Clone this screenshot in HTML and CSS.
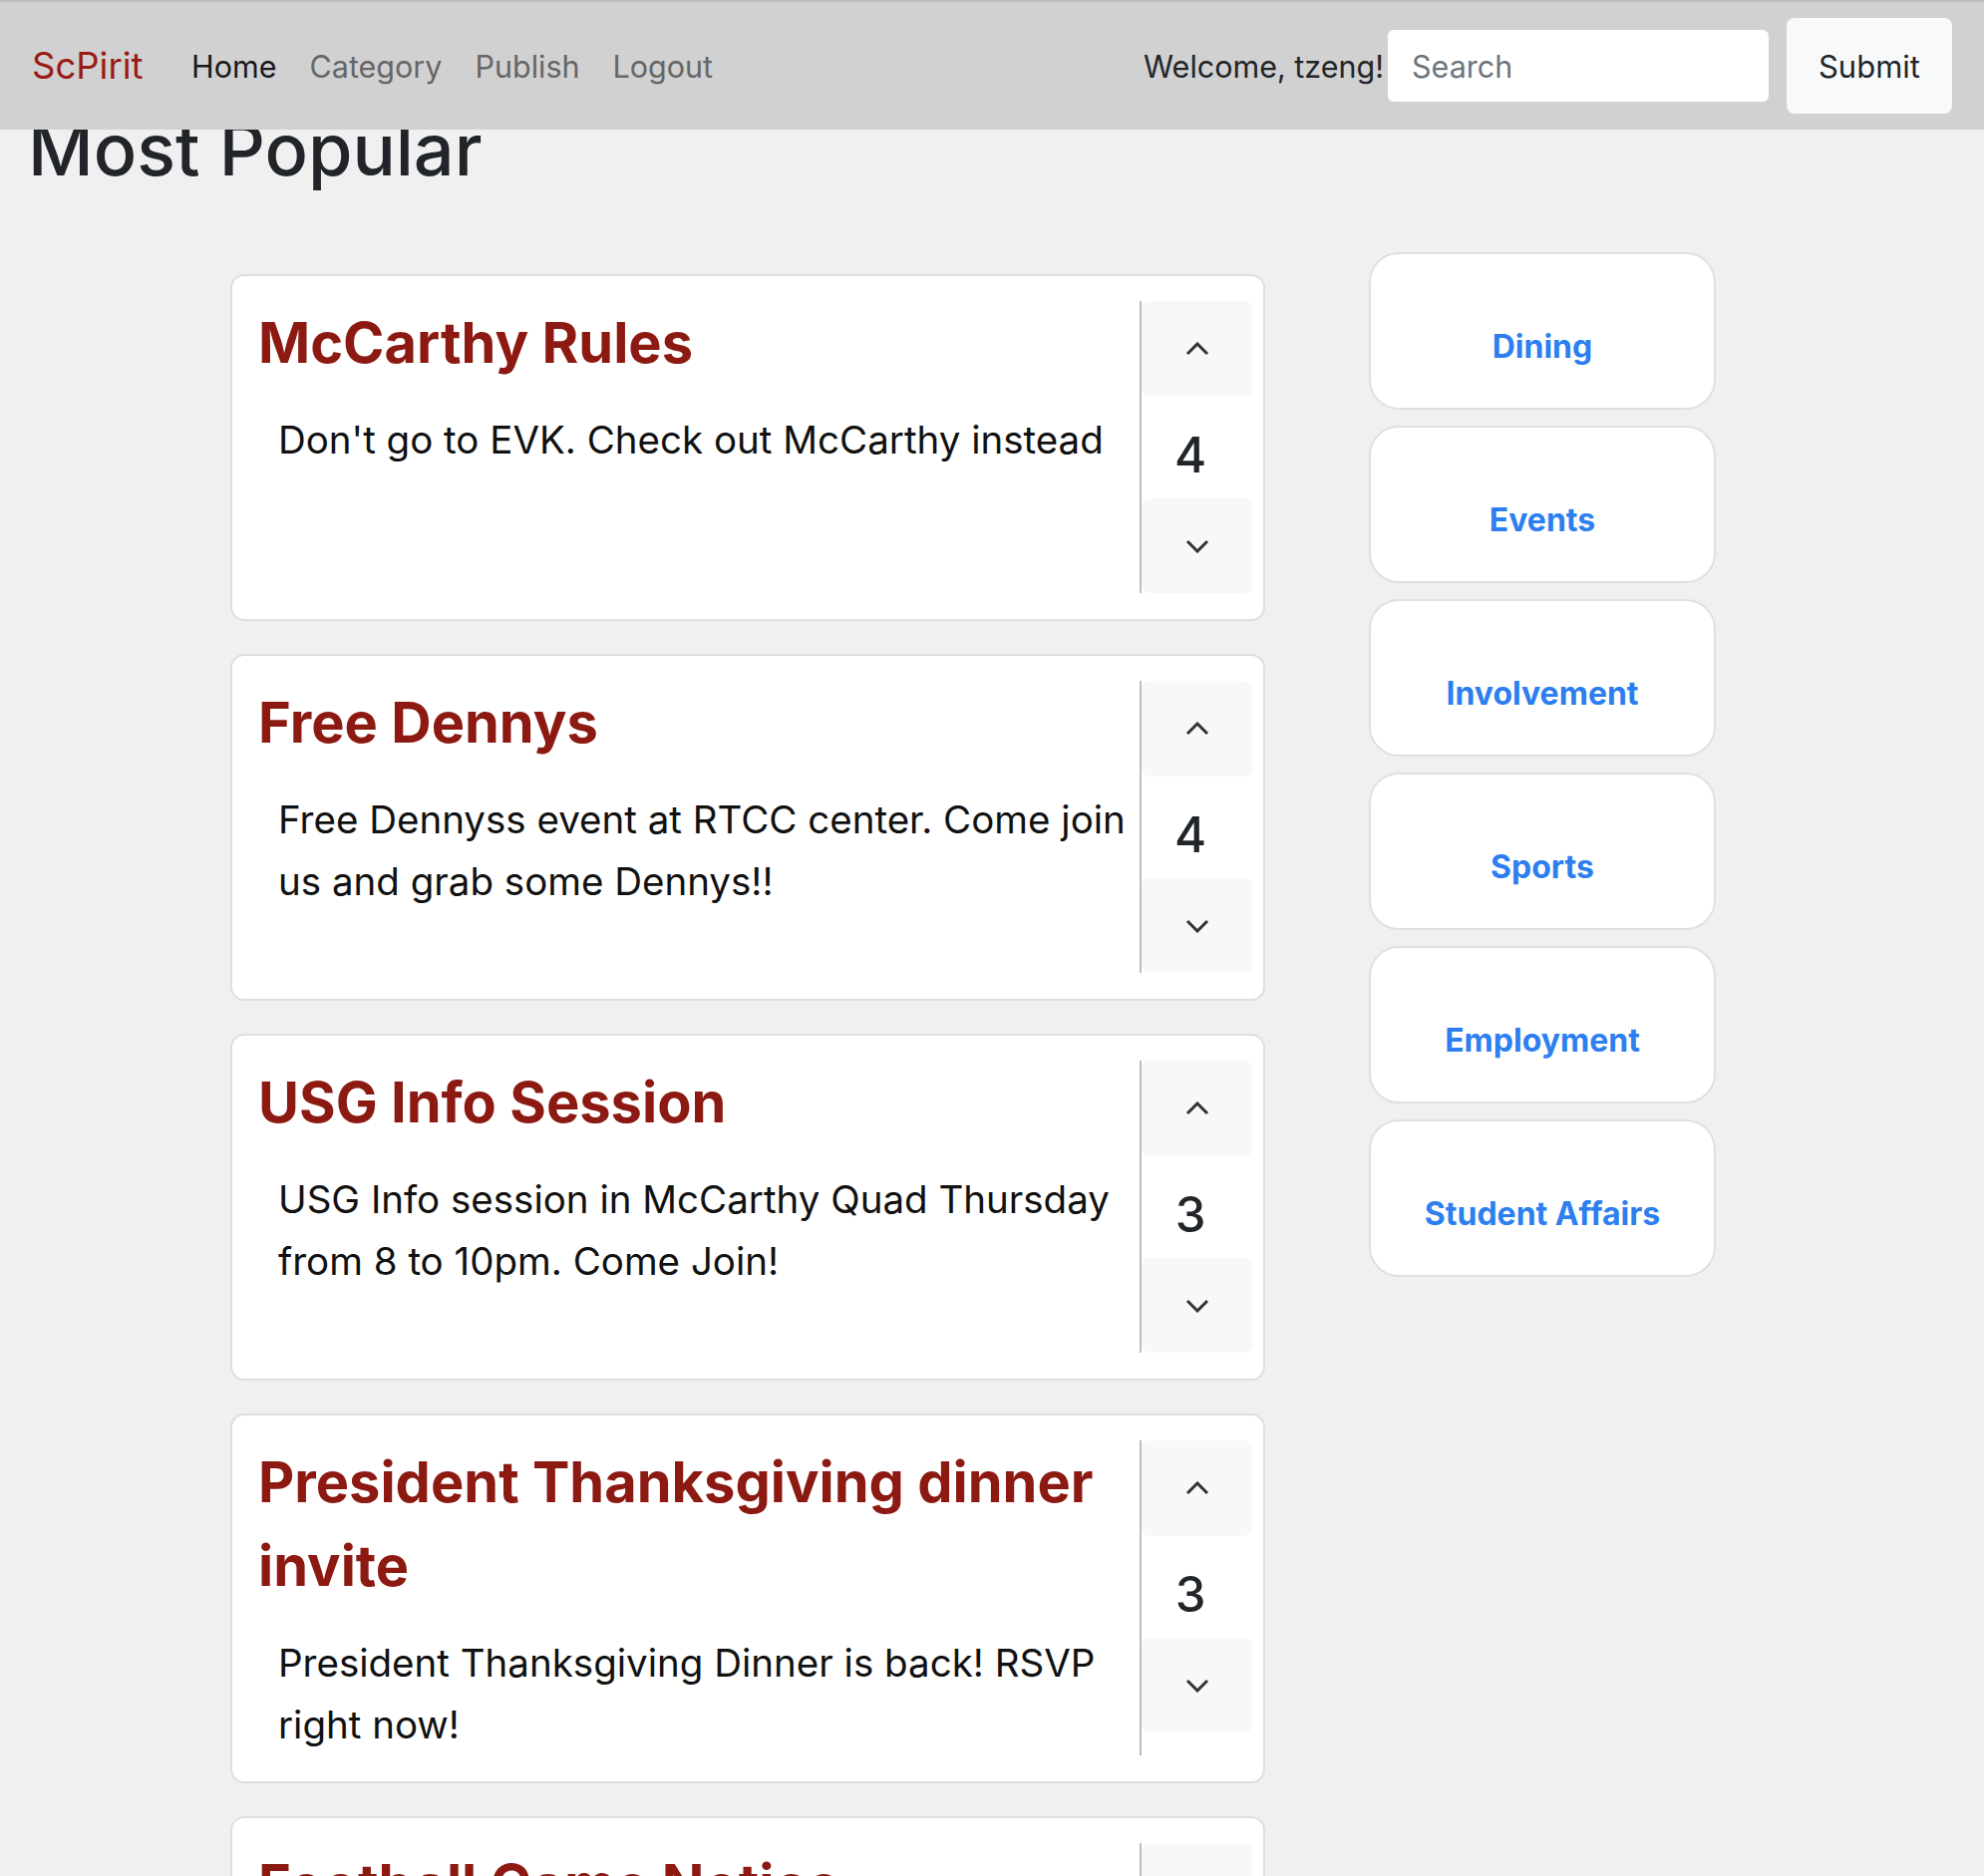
FILE: index.html
```html
<!DOCTYPE html>
<html>
<head>
  <meta charset="utf-8">
  <title>ScPirit</title>
  <link rel="stylesheet" href="styles.css">
</head>
<body>
  <nav class="navbar">
    <a href="#" class="brand">ScPirit</a>
    <a href="#" class="nav-link active">Home</a>
    <a href="#" class="nav-link">Category</a>
    <a href="#" class="nav-link">Publish</a>
    <a href="#" class="nav-link">Logout</a>
    <div class="nav-right">
      <span class="welcome">Welcome, tzeng!</span>
      <input class="search" type="search" placeholder="Search">
      <button class="submit-btn">Submit</button>
    </div>
  </nav>

  <main class="page">
    <h1 class="page-title">Most Popular</h1>
    <div class="layout">
      <div class="posts">
        <div class="post">
          <div class="post-body">
            <h2 class="post-title">McCarthy Rules</h2>
            <p class="post-text">Don't go to EVK. Check out McCarthy instead</p>
          </div>
          <div class="vote">
            <button class="vote-btn"><svg width="24" height="14" viewBox="0 0 24 14"><polyline points="2,12 12,2 22,12"/></svg></button>
            <div class="count">4</div>
            <button class="vote-btn"><svg width="24" height="14" viewBox="0 0 24 14"><polyline points="2,2 12,12 22,2"/></svg></button>
          </div>
        </div>

        <div class="post">
          <div class="post-body">
            <h2 class="post-title">Free Dennys</h2>
            <p class="post-text">Free Dennyss event at RTCC center. Come join us and grab some Dennys!!</p>
          </div>
          <div class="vote">
            <button class="vote-btn"><svg width="24" height="14" viewBox="0 0 24 14"><polyline points="2,12 12,2 22,12"/></svg></button>
            <div class="count">4</div>
            <button class="vote-btn"><svg width="24" height="14" viewBox="0 0 24 14"><polyline points="2,2 12,12 22,2"/></svg></button>
          </div>
        </div>

        <div class="post">
          <div class="post-body">
            <h2 class="post-title">USG Info Session</h2>
            <p class="post-text">USG Info session in McCarthy Quad Thursday from 8 to 10pm. Come Join!</p>
          </div>
          <div class="vote">
            <button class="vote-btn"><svg width="24" height="14" viewBox="0 0 24 14"><polyline points="2,12 12,2 22,12"/></svg></button>
            <div class="count">3</div>
            <button class="vote-btn"><svg width="24" height="14" viewBox="0 0 24 14"><polyline points="2,2 12,12 22,2"/></svg></button>
          </div>
        </div>

        <div class="post">
          <div class="post-body">
            <h2 class="post-title">President Thanksgiving dinner invite</h2>
            <p class="post-text">President Thanksgiving Dinner is back! RSVP right now!</p>
          </div>
          <div class="vote">
            <button class="vote-btn"><svg width="24" height="14" viewBox="0 0 24 14"><polyline points="2,12 12,2 22,12"/></svg></button>
            <div class="count">3</div>
            <button class="vote-btn"><svg width="24" height="14" viewBox="0 0 24 14"><polyline points="2,2 12,12 22,2"/></svg></button>
          </div>
        </div>

        <div class="post">
          <div class="post-body">
            <h2 class="post-title">Football Game Notice</h2>
            <p class="post-text">Football game this Saturday at Stevens Stadium. Go Broncos!</p>
          </div>
          <div class="vote">
            <button class="vote-btn"><svg width="24" height="14" viewBox="0 0 24 14"><polyline points="2,12 12,2 22,12"/></svg></button>
            <div class="count">2</div>
            <button class="vote-btn"><svg width="24" height="14" viewBox="0 0 24 14"><polyline points="2,2 12,12 22,2"/></svg></button>
          </div>
        </div>
      </div>

      <aside class="categories">
        <a href="#" class="category">Dining</a>
        <a href="#" class="category">Events</a>
        <a href="#" class="category">Involvement</a>
        <a href="#" class="category">Sports</a>
        <a href="#" class="category">Employment</a>
        <a href="#" class="category">Student Affairs</a>
      </aside>
    </div>
  </main>
</body>
</html>
```

FILE: styles.css
```css
html {
  font-size: 28px;
}
body {
  font-family: Inter, 'Noto Sans', sans-serif;
  margin: 0;
  background: #f0f0f0;
  color: #212529;
  height: 100vh;
  overflow: hidden;
}
a {
  text-decoration: none;
}

/* top bar */
.navbar {
  position: fixed;
  top: 0;
  left: 0;
  right: 0;
  z-index: 10;
  height: 128px;
  display: flex;
  align-items: center;
  padding: 0 32px;
  background: #d1d1d1;
  border-top: 2px solid #bdbdbd;
}
.brand {
  font-size: 36.5px;
  color: #9a1b14;
  margin-right: 32px;
}
.nav-link {
  font-size: 30.5px;
  color: #666;
  padding: 0 16.5px;
}
.nav-link.active {
  color: #1a1a1a;
}
.nav-right {
  margin-left: auto;
  display: flex;
  align-items: center;
}
.welcome {
  font-size: 30.5px;
  color: #212529;
  margin-right: 4px;
}
.search {
  width: 382px;
  height: 72px;
  box-sizing: border-box;
  border: none;
  border-radius: 6px;
  background: #fff;
  padding: 0 24px;
  font-family: inherit;
  font-size: 30.5px;
  color: #212529;
}
.search::placeholder {
  color: #6c757d;
}
.submit-btn {
  margin-left: 18px;
  width: 166px;
  height: 96px;
  border: none;
  border-radius: 8px;
  background: #f8f9fa;
  font-family: inherit;
  font-size: 31px;
  color: #212529;
}

/* content */
.page {
  padding: 108px 0 0 28px;
}
.page-title {
  margin: 0;
  font-size: 72px;
  font-weight: 500;
  line-height: 84px;
}
.layout {
  display: flex;
  align-items: flex-start;
  gap: 104px;
  margin-top: 61px;
  padding-left: 203px;
}
.posts {
  width: 1038px;
  padding-top: 22px;
  display: flex;
  flex-direction: column;
  gap: 33px;
}
.post {
  display: flex;
  background: #fff;
  border: 2px solid #dfdfdf;
  border-radius: 14px;
  padding: 25px 11px 26px 26px;
}
.post-body {
  flex: 1;
}
.post-title {
  margin: 0;
  font-size: 56px;
  font-weight: 700;
  line-height: 84px;
  color: #8c1a12;
}
.post-text {
  margin: 24px 0 0;
  padding-left: 20px;
  font-size: 38.5px;
  line-height: 62px;
  color: #111;
}
.vote {
  width: 111px;
  border-left: 2px solid #bdbdbd;
  display: flex;
  flex-direction: column;
}
.vote-btn {
  height: 96px;
  border: none;
  border-radius: 8px;
  background: #f8f8f8;
  display: flex;
  align-items: center;
  justify-content: center;
  padding: 0;
}
.vote-btn svg polyline {
  fill: none;
  stroke: #333;
  stroke-width: 3;
}
.vote-btn + .count + .vote-btn {
  height: 95px;
}
.count {
  height: 102px;
  box-sizing: border-box;
  padding: 14px 13px 0 0;
  display: flex;
  align-items: center;
  justify-content: center;
  font-size: 49px;
  font-weight: 500;
}

/* category list */
.categories {
  width: 348px;
  display: flex;
  flex-direction: column;
  gap: 16px;
}
.category {
  display: block;
  height: 158px;
  box-sizing: border-box;
  padding-top: 73px;
  background: #fff;
  border: 2px solid #e0e0e0;
  border-radius: 30px;
  text-align: center;
  font-size: 32px;
  font-weight: 700;
  color: #2d7ff0;
}
```
